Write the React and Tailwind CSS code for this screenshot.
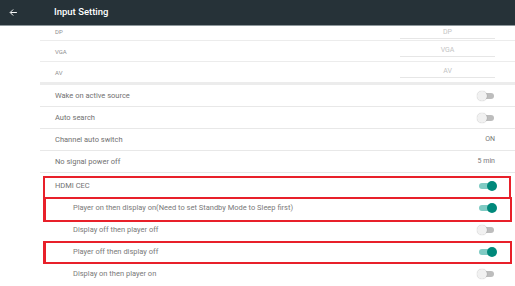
import React from "react";

const font = { fontFamily: "Roboto, 'Liberation Sans', sans-serif" };

function Toggle({ on }) {
  return (
    <div className="relative flex h-[10px] w-[16px] items-center">
      <div className={`h-[6px] w-[15px] rounded-full ${on ? "bg-[#80cbc4]" : "bg-[#bdbdbd]"}`} />
      <div
        className={`absolute top-0 h-[10px] w-[10px] rounded-full ${
          on ? "right-[-2px] bg-[#00897b]" : "left-[-2px] bg-[#f1f1f1] shadow-[0_0_1px_rgba(0,0,0,0.35)]"
        }`}
      />
    </div>
  );
}

function SourceRow({ label, first }) {
  return (
    <div
      className={`flex border-b border-[#ececec] pl-[15px] ${
        first ? "h-[15px] items-start pt-[1px]" : "h-[21px] items-center"
      }`}
    >
      <span className="flex-1 text-[6px] text-[#8f8f8f]">{label}</span>
      <div className="mr-[20px] flex h-[12px] w-[95px] items-center justify-center border-b border-[#e6e6e6] text-[7px] text-[#c4c4c4]">
        {label}
      </div>
    </div>
  );
}

function Row({ label, right, sub, border = true }) {
  return (
    <div
      className={`flex h-[22px] items-center pr-[20px] ${sub ? "pl-[33px] text-[#7a7a7a]" : "pl-[15px] text-[#717171]"} ${
        border ? "border-b border-[#e8e8e8]" : ""
      }`}
    >
      <span className="flex-1 text-[7.5px]">{label}</span>
      {typeof right === "string" ? <span className="text-[7px] text-[#777]">{right}</span> : right}
    </div>
  );
}

export default function App() {
  return (
    <div className="relative h-[286px] w-[515px] overflow-hidden bg-white" style={font}>
      <div className="flex h-[26px] items-center border-b border-[#8e989c] bg-[#263238]">
        <svg className="ml-[9px] h-[9px] w-[9px]" viewBox="0 0 24 24" fill="none" stroke="white" strokeWidth="2.6">
          <path d="M21 12H4M11 4l-8 8 8 8" />
        </svg>
        <span className="ml-[36px] text-[9.5px] font-medium text-white">Input Setting</span>
      </div>

      <div className="ml-[40px]">
        <SourceRow label="DP" first />
        <SourceRow label="VGA" />
        <SourceRow label="AV" />
        <div className="h-[2px] bg-[#ececec]" />
        <Row label="Wake on active source" right={<Toggle on={false} />} />
        <Row label="Auto search" right={<Toggle on={false} />} />
        <Row label="Channel auto switch" right="ON" />
        <Row label="No signal power off" right="5 min" />
        <div className="h-[2px]" />
        <Row label="HDMI CEC" right={<Toggle on />} border={false} />
        <Row label="Player on then display on(Need to set Standby Mode to Sleep first)" right={<Toggle on />} sub border={false} />
        <Row label="Display off then player off" right={<Toggle on={false} />} sub border={false} />
        <Row label="Player off then display off" right={<Toggle on />} sub border={false} />
        <Row label="Display on then player on" right={<Toggle on={false} />} sub border={false} />
      </div>

      <div className="pointer-events-none absolute left-[43px] top-[176px] h-[23px] w-[468px] border-2 border-[#e8202a]" />
      <div className="pointer-events-none absolute left-[43px] top-[197px] h-[25px] w-[469px] border-2 border-l-[3px] border-[#e8202a]" />
      <div className="pointer-events-none absolute left-[43px] top-[241px] h-[23px] w-[469px] border-2 border-l-[3px] border-[#e8202a]" />
    </div>
  );
}
